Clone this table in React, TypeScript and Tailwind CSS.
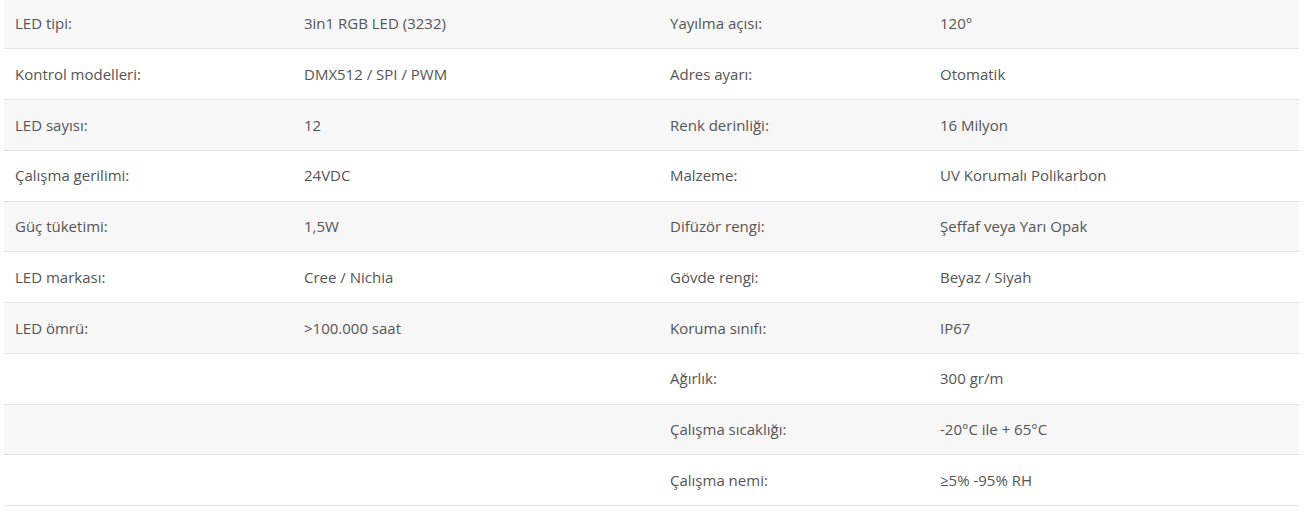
const rows: [string, string, string, string][] = [
  ["LED tipi:", "3in1 RGB LED (3232)", "Yayılma açısı:", "120°"],
  ["Kontrol modelleri:", "DMX512 / SPI / PWM", "Adres ayarı:", "Otomatik"],
  ["LED sayısı:", "12", "Renk derinliği:", "16 Milyon"],
  ["Çalışma gerilimi:", "24VDC", "Malzeme:", "UV Korumalı Polikarbon"],
  ["Güç tüketimi:", "1,5W", "Difüzör rengi:", "Şeffaf veya Yarı Opak"],
  ["LED markası:", "Cree / Nichia", "Gövde rengi:", "Beyaz / Siyah"],
  ["LED ömrü:", ">100.000 saat", "Koruma sınıfı:", "IP67"],
  ["", "", "Ağırlık:", "300 gr/m"],
  ["", "", "Çalışma sıcaklığı:", "-20°C ile + 65°C"],
  ["", "", "Çalışma nemi:", "≥5% -95% RH"],
];

export default function App() {
  return (
    <div className="w-[1310px] h-[516px] overflow-hidden bg-white pl-[4px] pr-[11px]">
      <div className="-mt-[1.5px] font-['Open_Sans',sans-serif] text-[15px] text-[#555]">
        {rows.map((r, i) => (
          <div
            key={i}
            className={`grid grid-cols-[289px_366px_270px_370px] h-[50.78px] items-center border-b border-[#e3e3e3] ${
              i % 2 === 0 ? "bg-[#f7f7f7]" : "bg-white"
            }`}
          >
            {r.map((c, j) => (
              <div key={j} className="pl-[11px] whitespace-nowrap">
                {c}
              </div>
            ))}
          </div>
        ))}
      </div>
    </div>
  );
}
